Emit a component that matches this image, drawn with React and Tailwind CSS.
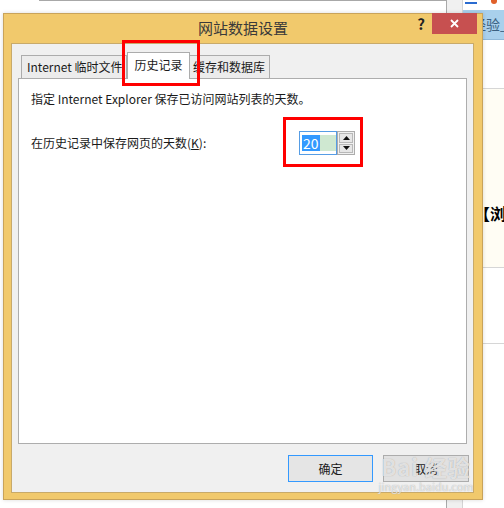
import React from "react";

function SpinArrow({ up }) {
  return (
    <svg width="7" height="4" viewBox="0 0 7 4">
      {up ? <path d="M0 4 L3.5 0 L7 4 Z" fill="#111" /> : <path d="M0 0 L3.5 4 L7 0 Z" fill="#111" />}
    </svg>
  );
}

export default function App() {
  return (
    <div className="relative w-[504px] h-[508px] overflow-hidden bg-white font-['Noto_Sans_CJK_SC',sans-serif]">
      {/* page behind the dialog */}
      <div className="flex h-full">
        <div className="w-[446px] shrink-0">
          <div className="ml-[39px] h-px bg-[#a8a8a8]" />
        </div>
        <div className="w-[17px] shrink-0 h-full border-l border-[#a9a9a9] border-r border-r-[#d4d4d4] bg-[#f0f0f0]" />
        <div className="w-[41px] shrink-0 flex flex-col">
          <div className="h-[10px] shrink-0 flex items-start gap-[14px] pl-[2px]">
            <div className="w-[12px] h-[4px] border-b-2 border-[#2a6bd0]" />
            <div className="w-[6px] h-[4px] rounded-b-full bg-[#e0602a]" />
          </div>
          <div className="h-[30px] shrink-0 bg-[#a9d0ec] border-b border-[#8fb8d8] pl-[9px] flex items-center text-[14px] text-[#3b6080] whitespace-nowrap">
            经验_
          </div>
          <div className="h-[49px] shrink-0 border-b border-[#d6d6d6]" />
          <div className="h-[179px] shrink-0 bg-[#fffdf4] border-b border-[#d6d6d6] pl-[11px] pt-[116px] text-[16px] font-bold text-black leading-none whitespace-nowrap">
            【浏
          </div>
          <div className="h-[76px] shrink-0 border-b border-[#d6d6d6]" />
        </div>
      </div>

      {/* dialog window */}
      <div className="absolute left-[3px] top-[13px] w-[480px] h-[487px] border border-[#c9a35a] bg-[#f1c96c] flex flex-col shadow-[0_0_4px_rgba(0,0,0,0.15)]">
        <div className="relative h-[29px] flex items-center justify-center text-[15px] text-[#3a3a3a]">
          网站数据设置
          <div className="absolute left-[409px] top-0 w-[16px] h-[20px] flex items-center justify-center text-[15px] font-bold text-[#222]">
            ?
          </div>
          <div className="absolute left-[428px] top-[-1px] w-[45px] h-[21px] bg-[#c75050] flex items-center justify-center">
            <svg width="9" height="9" viewBox="0 0 9 9">
              <path d="M1 1 L8 8 M8 1 L1 8" stroke="#fff" strokeWidth="1.8" />
            </svg>
          </div>
        </div>

        <div className="ml-[7px] mr-[8px] mb-[6px] flex-1 border border-[#c8aa6a] bg-[#f0f0f0] flex flex-col px-[6px] pt-[8px]">
          {/* tabs */}
          <div className="relative z-10 flex items-end h-[26px] pl-[3px] text-[12px] text-[#1a1a1a]">
            <div className="w-[106px] h-[23px] border border-b-0 border-[#acacac] bg-[#ececec] pl-[5px] flex items-center whitespace-nowrap">
              Internet 临时文件
            </div>
            <div className="relative w-[63px] h-[27px] -mb-px border border-b-0 border-[#acacac] bg-white flex items-center justify-center pb-[3px]">
              历史记录
              <div className="absolute left-[-6px] top-[-13px] w-[78px] h-[46px] border-[3px] border-[#ff0000]" />
            </div>
            <div className="w-[80px] h-[23px] border border-b-0 border-l-0 border-[#acacac] bg-[#ececec] pl-[3px] flex items-center whitespace-nowrap">
              缓存和数据库
            </div>
          </div>

          {/* panel */}
          <div className="h-[366px] border border-[#adadad] bg-white px-[12px] pt-[12px] text-[12px] text-[#1a1a1a]">
            <div className="leading-[16px] whitespace-nowrap">指定 Internet Explorer 保存已访问网站列表的天数。</div>
            <div className="mt-[24px] flex items-center h-[24px]">
              <div className="w-[268px] whitespace-nowrap">
                在历史记录中保存网页的天数(<span className="underline">K</span>):
              </div>
              <div className="relative flex h-[24px]">
                <div className="absolute left-[-16px] top-[-14px] w-[80px] h-[50px] border-[3px] border-[#ff0000]" />
                <div className="w-[38px] h-[24px] border border-[#569de5] bg-white flex items-center pl-[2px]">
                  <div className="flex h-[16px] flex-1">
                    <span className="bg-[#3399ff] text-white text-[14px] leading-[16px] px-px">20</span>
                    <span className="flex-1 bg-[#cfe8d1]" />
                  </div>
                </div>
                <div className="w-[18px] h-[24px] border border-[#acacac] bg-[#f0f0f0] flex flex-col gap-px p-px">
                  <div className="flex-1 border border-[#b8b8b8] bg-[#e6e6e6] flex items-center justify-center">
                    <SpinArrow up />
                  </div>
                  <div className="flex-1 border border-[#b8b8b8] bg-[#e6e6e6] flex items-center justify-center">
                    <SpinArrow />
                  </div>
                </div>
              </div>
            </div>
          </div>

          {/* buttons */}
          <div className="relative mt-[11px] -mr-[2px] flex justify-end gap-[10px] text-[12px] text-[#1a1a1a]">
            <div className="w-[85px] h-[27px] border border-[#3399ff] bg-[#e5e5e5] flex items-center justify-center">
              确定
            </div>
            <div className="w-[86px] h-[27px] border border-[#acacac] bg-[#e1e1e1] flex items-center justify-center">
              取消
            </div>
            <div className="pointer-events-none absolute right-[-2px] top-[-2px] w-[90px] flex flex-col items-center text-white/70 [text-shadow:0_0_1px_#9a9a9a]">
              <div className="text-[22px] font-bold leading-[26px] tracking-[1px]">Bai 经验</div>
              <div className="text-[11px] leading-[14px]">jingyan.baidu.com</div>
            </div>
          </div>
        </div>
      </div>
    </div>
  );
}
